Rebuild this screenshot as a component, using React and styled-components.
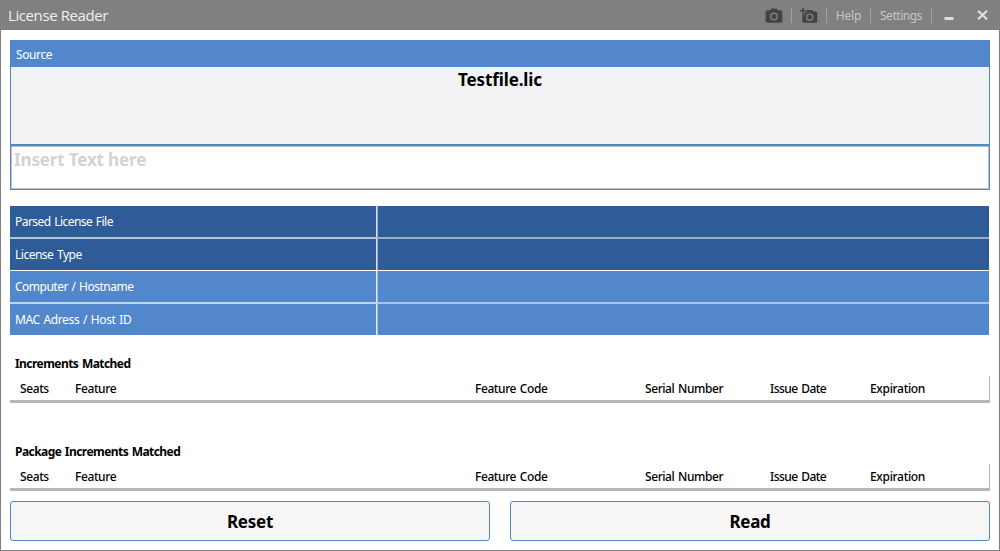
import React from "react";
import styled, { createGlobalStyle } from "styled-components";

const GlobalStyle = createGlobalStyle`
  * { box-sizing: border-box; }
  body { margin: 0; overflow: hidden; }
`;

const Window = styled.div`
  width: 1000px;
  height: 551px;
  display: flex;
  flex-direction: column;
  background: #fff;
  border: 1px solid #808080;
  border-top: 0;
  font-family: "Noto Sans", "Open Sans", sans-serif;
  font-size: 12px;
  line-height: 16px;
  color: #000;
`;

const Text = styled.span`
  white-space: pre;
  letter-spacing: ${(p) => p.$track || 0}px;
  word-spacing: ${(p) => p.$word || 0}px;
`;

const TitleBar = styled.header`
  flex: none;
  height: 30px;
  display: flex;
  align-items: flex-start;
  justify-content: space-between;
  padding: 1px 0 0 7px;
  background: #808080;
  color: #f0f0f0;
`;

const Title = styled.h1`
  margin: 0;
  font-family: "Open Sans", sans-serif;
  font-size: 15px;
  font-weight: 400;
  line-height: 28px;
`;

const Commands = styled.nav`
  display: flex;
  align-items: center;
  height: 29px;
  color: #c6c6c6;
`;

const Command = styled.button`
  display: flex;
  align-items: center;
  justify-content: center;
  width: ${(p) => p.$width}px;
  height: 29px;
  padding: 0 0 ${(p) => p.$lift || 0}px;
  border: 0;
  background: none;
  color: inherit;
  font: inherit;
`;

const Separator = styled.span`
  width: 1px;
  height: 15px;
  background: #a2a2a2;
`;

const Content = styled.main`
  display: flex;
  flex-direction: column;
  padding: 10px 9px 0;
`;

const SourcePanel = styled.section`
  height: 150px;
  display: flex;
  flex-direction: column;
  border: 1px solid #5387cb;
`;

const SourceHeader = styled.div`
  height: 26px;
  padding: 6px 5px 0;
  background: #5387cb;
  color: #fff;
`;

const DropArea = styled.div`
  height: 79px;
  padding-top: 1px;
  border-bottom: 2px solid #5387cb;
  background: #f1f2f4;
  text-align: center;
  font-size: 17px;
  font-weight: 700;
  line-height: 24px;
`;

const TextInput = styled.div`
  flex: 1;
  padding: 1px 2px;
  border: 1px solid #bfbfbf;
  color: #d3d3d3;
  font-size: 17px;
  font-weight: 700;
  line-height: 24px;
`;

const InfoGrid = styled.section`
  width: 979px;
  margin-top: 16px;
  display: grid;
  grid-template-columns: 368px 611px;
  grid-template-rows: 33px 32px 33px 31px;
  color: #fff;
`;

const InfoLabel = styled.div`
  padding: 8px 5px 0;
  background: ${(p) => p.$color};
  border-right: 1px solid rgba(255, 255, 255, 0.5);
  box-shadow: inset -1px 0 rgba(255, 255, 255, 0.8);
  border-bottom: ${(p) => p.$line}px solid ${(p) => (p.$line === 1 ? "#fff" : "rgba(255,255,255,0.65)")};
`;

const InfoValue = styled.div`
  background: ${(p) => p.$color};
  border-bottom: ${(p) => p.$line}px solid ${(p) => (p.$line === 1 ? "#fff" : "rgba(255,255,255,0.5)")};
`;

const Increments = styled.section`
  height: 88px;
  padding-top: 21px;
`;

const IncrementsTitle = styled.h2`
  height: 20px;
  margin: 0;
  padding-left: 5px;
  font-size: 12px;
  font-weight: 700;
  line-height: 16px;
`;

const ColumnHeaders = styled.div`
  height: 27px;
  display: grid;
  grid-template-columns: 55px 400px 170px 125px 100px 1fr;
  padding: 5px 0 0 10px;
  border-right: 1px solid #b8b8b8;
  border-bottom: 3px solid #b8b8b8;
  font-weight: 500;
`;

const Actions = styled.footer`
  display: grid;
  grid-template-columns: 1fr 1fr;
  gap: 20px;
  margin-top: -10px;
`;

const ActionButton = styled.button`
  height: 40px;
  padding: 1px 0 0;
  border: 1px solid #5387cb;
  border-radius: 3px;
  background: #f6f6f6;
  color: #000;
  font: 700 17px/24px "Noto Sans", sans-serif;
`;

const DARK = "#2d5c98";
const LIGHT = "#5387cb";

const infoRows = [
  { label: "Parsed License File", color: DARK, line: 2, track: -0.54 },
  { label: "License Type", color: DARK, line: 1, track: -0.5 },
  { label: "Computer / Hostname", color: LIGHT, line: 2, track: -0.5 },
  { label: "MAC Adress / Host ID", color: LIGHT, line: 0, track: -0.38 },
];

const columns = [
  ["Seats", -0.4],
  ["Feature", -0.4],
  ["Feature Code", -0.41],
  ["Serial Number", -0.43],
  ["Issue Date", -0.54],
  ["Expiration", -0.32],
];

const CameraIcon = () => (
  <svg width="20" height="20" viewBox="0 0 24 24" fill="#434343">
    <path fillRule="evenodd" d="M9 3 7.2 5H4a2 2 0 0 0-2 2v11a2 2 0 0 0 2 2h16a2 2 0 0 0 2-2V7a2 2 0 0 0-2-2h-3.200L15 3zM12 7.800a4.700 4.700 0 1 1 0 9.400 4.700 4.700 0 0 1 0-9.400z" />
    <circle cx="12" cy="12.500" r="3" />
  </svg>
);

const AddCameraIcon = () => (
  <svg width="18" height="18" viewBox="0 0 24 24" fill="#434343">
    <path d="M3 4V1h2v3h3v2H5v3H3V6H0V4z" />
    <path fillRule="evenodd" d="M6 10V7h3V4h7l1.800 2H21a2 2 0 0 1 2 2v11a2 2 0 0 1-2 2H5a2 2 0 0 1-2-2V10zM13 8.500a5 5 0 1 0 0 10 5 5 0 0 0 0-10z" />
    <circle cx="13" cy="13.500" r="3.200" />
  </svg>
);

const MinimizeIcon = () => (
  <svg width="10" height="12" viewBox="0 0 10 12">
    <path d="M.5 8h9v3h-9z" fill="#dedede" />
  </svg>
);

const CloseIcon = () => (
  <svg width="11" height="10" viewBox="0 0 11 10">
    <path d="M1 .7l9 8.600M10 .7L1 9.300" stroke="#dedede" strokeWidth="2.200" />
  </svg>
);

function IncrementTable({ title, track }) {
  return (
    <Increments>
      <IncrementsTitle><Text $track={track} $word={1}>{title}</Text></IncrementsTitle>
      <ColumnHeaders>
        {columns.map(([name, t]) => <Text key={name} $track={t} $word={1}>{name}</Text>)}
      </ColumnHeaders>
    </Increments>
  );
}

export default function App() {
  return (
    <Window>
      <GlobalStyle />
      <TitleBar>
        <Title><Text $track={-0.4}>License Reader</Text></Title>
        <Commands>
          <Command $width={35} aria-label="Screenshot"><CameraIcon /></Command>
          <Separator />
          <Command $width={34} aria-label="Add screenshot"><AddCameraIcon /></Command>
          <Separator />
          <Command $width={43}><Text $track={-0.2}>Help</Text></Command>
          <Separator />
          <Command $width={60}><Text $track={-0.45}>Settings</Text></Command>
          <Separator />
          <Command $width={34} $lift={1} aria-label="Minimize"><MinimizeIcon /></Command>
          <Command $width={33} $lift={1} aria-label="Close"><CloseIcon /></Command>
        </Commands>
      </TitleBar>
      <Content>
        <SourcePanel>
          <SourceHeader><Text $track={-0.4}>Source</Text></SourceHeader>
          <DropArea><Text $track={-0.12}>Testfile.lic</Text></DropArea>
          <TextInput><Text $track={-0.14}>Insert Text here</Text></TextInput>
        </SourcePanel>
        <InfoGrid>
          {infoRows.map((r) => (
            <React.Fragment key={r.label}>
              <InfoLabel $color={r.color} $line={r.line}>
                <Text $track={r.track} $word={1}>{r.label}</Text>
              </InfoLabel>
              <InfoValue $color={r.color} $line={r.line} />
            </React.Fragment>
          ))}
        </InfoGrid>
        <IncrementTable title="Increments Matched" track={-0.55} />
        <IncrementTable title="Package Increments Matched" track={-0.56} />
        <Actions>
          <ActionButton><Text $track={-0.25}>Reset</Text></ActionButton>
          <ActionButton><Text $track={-0.25}>Read</Text></ActionButton>
        </Actions>
      </Content>
    </Window>
  );
}
